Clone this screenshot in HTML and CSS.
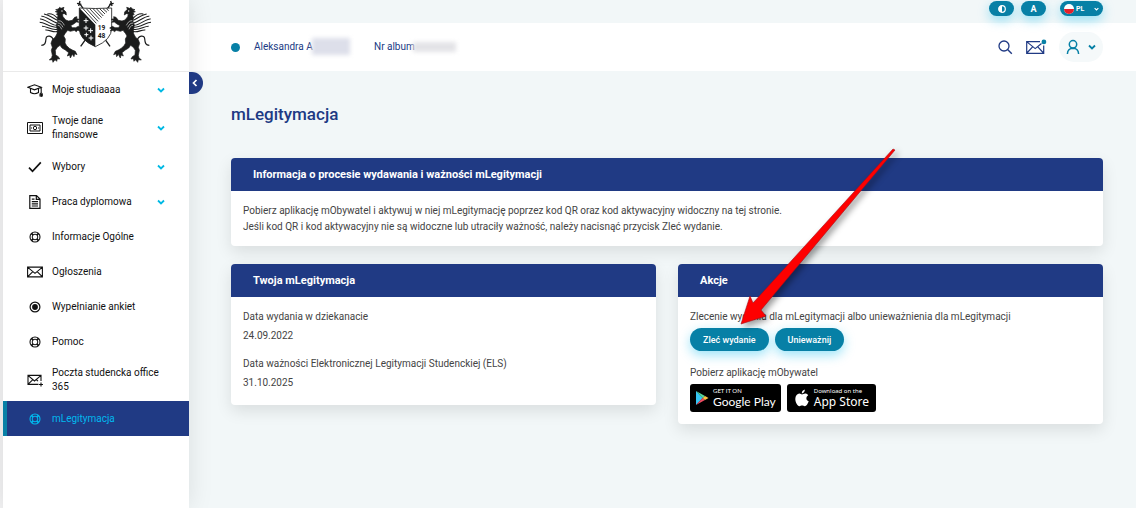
FILE: index.html
```
<!DOCTYPE html>
<html lang="pl">
  <head>
    <meta charset="utf-8" />
    <meta name="viewport" content="width=device-width, initial-scale=1" />
    <title>mLegitymacja</title>
    <link rel="stylesheet" href="styles.css" />
  </head>
  <body>
    <!-- shared icons -->
    <svg class="sprite" aria-hidden="true">
      <symbol id="chevron" viewBox="0 0 8 6">
        <path d="M1 1.5 L4 4.5 L7 1.5" fill="none" stroke="currentColor" stroke-width="1.8" />
      </symbol>
      <symbol id="ring" viewBox="0 0 16 16">
        <g fill="none" stroke="currentColor">
          <circle cx="8" cy="8" r="5" stroke-width="1.1" />
          <circle cx="8" cy="8" r="2.8" stroke-width="1" />
          <path d="M4.4 4.4 L6.2 6.2 M11.6 4.4 L9.8 6.2 M4.4 11.6 L6.2 9.8 M11.6 11.6 L9.8 9.8" stroke-width="1.8" />
        </g>
      </symbol>
      <symbol id="mail" viewBox="0 0 16 16">
        <path d="M.6 3.1 H15.4 V12.9 H.6 Z M.8 3.3 L8 9.3 L15.2 3.3 M.8 12.7 L5.8 7.6 M15.2 12.7 L10.2 7.6" fill="none" stroke="currentColor" stroke-width="1.1" />
      </symbol>
    </svg>

    <div class="page">
      <aside class="sidebar">
        <a class="logo" href="#" aria-label="Strona główna">
          <svg class="crest" viewBox="0 0 375 204">
            <defs>
              <g id="griffin">
                <path d="M62 29 L70 27 L74 22 L78 25 L87 22 L85 28 L93 36 L94 45 L88 41 L82 42 L84 50 L92 60 L101 63 L112 61 L119 52 L126 50 L125 56 L133 58 L127 62 L132 67 L124 66 L116 72 L107 77 L112 83 L122 83 L130 79 L138 84 L132 87 L136 93 L128 91 L124 95 L118 91 L106 94 L98 91 L90 101 L86 108 L91 117 L90 129 L95 137 L103 145 L112 150 L121 154 L126 164 L119 161 L117 170 L112 163 L106 174 L104 165 L97 168 L101 158 L91 150 L81 144 L75 136 L67 142 L61 151 L62 165 L70 170 L74 177 L67 176 L65 184 L60 179 L54 187 L52 179 L43 180 L50 173 L52 166 L49 151 L52 142 L48 130 L52 119 L61 111 L66 101 L67 88 L64 76 L68 64 L67 55 L69 46 L64 43 L69 38 L61 35 L68 32 Z" fill="#1b1c1c" stroke="#1b1c1c" stroke-width="2" />
                <circle cx="81" cy="33" r="2" fill="#fff" />
                <path d="M65 76 C50 77 26 54 15 57 M66 69 C53 66 29 46 19 49 M67 61 C55 55 40 44 27 42 M68 81 C52 86 28 67 14 67 M69 87 C54 94 34 78 21 79 M71 93 C58 101 43 88 31 90 M68 55 C58 44 49 39 37 42" fill="none" stroke="#1b1c1c" stroke-width="3.2" />
                <path d="M70 62 C82 62 84 70 88 76 M68 69 C78 69 80 76 84 82 M68 76 C76 77 77 82 80 88" fill="none" stroke="#fff" stroke-width="1.8" />
                <path d="M55 121 C52 106 34 104 33 116 C32 129 30 136 19 136" fill="none" stroke="#1b1c1c" stroke-width="3.5" />
              </g>
            </defs>
            <path d="M132 8 L225 139 M230 8 L137 139" stroke="#1b1c1c" stroke-width="4" />
            <path d="M126 10 L139 13 M135 3 L131 18 M236 10 L223 13 M227 3 L231 18" stroke="#1b1c1c" stroke-width="4" />
            <path d="M133 24 Q181 27 230 24 V84 Q230 119 181 140 Q132 119 133 84 Z" fill="#fff" stroke="#1b1c1c" stroke-width="2.5" />
            <path d="M133 24 L181 74 V140 Q132 119 133 84 Z" fill="#1b1c1c" />
            <path d="M144 26 L184 70 M154 26 L189 64 M164 26 L194 58 M174 26 L200 53 M184 26 L205 48 M194 26 L210 42 M204 26 L216 37 M214 26 L221 32" stroke="#1b1c1c" stroke-width="2.6" />
            <path d="M153 55 v14 M146 62 h14 M153 77 v14 M146 84 h14 M167 85 v14 M160 92 h14 M154 98 v12 M148 104 h12 M168 107 v14 M161 114 h14" stroke="#fff" stroke-width="3" />
            <text x="188" y="91" class="crest-year">19</text>
            <text x="188" y="115" class="crest-year">48</text>
            <use href="#griffin" />
            <use href="#griffin" transform="matrix(-1 0 0 1 362 0)" />
          </svg>
        </a>

        <nav>
          <ul class="menu">
            <li><a href="#">
              <svg class="menu-icon" viewBox="0 0 16 16"><path d="M.8 5.3 L7.5 2.8 L14.2 5.3 L7.5 7.8 Z M3.5 6.5 V10.5 Q7.5 13 11.5 10.5 V6.5 M14.2 5.3 V11 M13 14.5 V12 Q14.2 10 15.3 12 V14.5 M14.2 12 V15" fill="none" stroke="currentColor" stroke-width="1.1" /></svg>
              <span>Moje studiaaaa</span>
              <svg class="chevron"><use href="#chevron" /></svg>
            </a></li>
            <li><a href="#">
              <svg class="menu-icon" viewBox="0 0 16 16"><path d="M.5 2.5 H15.5 V13.5 H.5 Z M3 5 H13 V11 H3 Z" fill="none" stroke="currentColor" /><circle cx="8" cy="8" r="1.7" fill="none" stroke="currentColor" /><path d="M4 8 h1 M11 8 h1" stroke="currentColor" /></svg>
              <span>Twoje dane<br />finansowe</span>
              <svg class="chevron"><use href="#chevron" /></svg>
            </a></li>
            <li><a href="#">
              <svg class="menu-icon" viewBox="0 0 16 16"><path d="M2 8.7 L5.5 12.3 L13.8 3.3" fill="none" stroke="currentColor" stroke-width="1.7" /></svg>
              <span>Wybory</span>
              <svg class="chevron"><use href="#chevron" /></svg>
            </a></li>
            <li><a href="#">
              <svg class="menu-icon" viewBox="0 0 16 16"><path d="M2.8 1.6 H9.5 L13 5 V14.4 H2.8 Z M9.3 1.8 V5.3 H12.8 M4.8 5.2 H7.5 M4.8 7.6 H11 M4.8 9.8 H11 M4.8 12 H11" fill="none" stroke="currentColor" stroke-width="1.2" /></svg>
              <span>Praca dyplomowa</span>
              <svg class="chevron"><use href="#chevron" /></svg>
            </a></li>
            <li><a href="#">
              <svg class="menu-icon"><use href="#ring" /></svg>
              <span>Informacje Ogólne</span>
            </a></li>
            <li><a href="#">
              <svg class="menu-icon"><use href="#mail" /></svg>
              <span>Ogłoszenia</span>
            </a></li>
            <li><a href="#">
              <svg class="menu-icon" viewBox="0 0 16 16"><circle cx="8" cy="8" r="4.9" fill="none" stroke="currentColor" stroke-width="1.2" /><circle cx="8" cy="8" r="2.9" fill="currentColor" /></svg>
              <span>Wypełnianie ankiet</span>
            </a></li>
            <li><a href="#">
              <svg class="menu-icon"><use href="#ring" /></svg>
              <span>Pomoc</span>
            </a></li>
            <li><a href="#">
              <svg class="menu-icon" viewBox="0 0 16 16"><path d="M11.5 12.4 H1 V3.4 H14 V9 M1.2 3.6 L7.5 9 L13.8 3.6 M1.2 12.2 L5.6 7.8 M9.6 7.8 L11 9.2 M14 10.5 V14.5 M12 12.5 H16" fill="none" stroke="currentColor" stroke-width="1.1" /></svg>
              <span>Poczta studencka office<br />365</span>
            </a></li>
            <li><a href="#" class="active" aria-current="page">
              <svg class="menu-icon"><use href="#ring" /></svg>
              <span>mLegitymacja</span>
            </a></li>
          </ul>
        </nav>

        <button class="collapse" type="button" aria-label="Zwiń menu">
          <svg viewBox="0 0 8 8"><path d="M5.5 1 L2.5 4 L5.5 7" fill="none" stroke="currentColor" stroke-width="1.7" /></svg>
        </button>
      </aside>

      <div class="main">
        <div class="topbar">
          <button class="pill" type="button" aria-label="Kontrast">
            <svg class="contrast" viewBox="0 0 8 8"><circle cx="4" cy="4" r="3.3" fill="none" stroke="#fff" stroke-width="1.2" /><path d="M4 .7 A3.3 3.3 0 0 0 4 7.3 Z" fill="#fff" /></svg>
          </button>
          <button class="pill" type="button" aria-label="Rozmiar tekstu">A</button>
          <label class="pill language">
            <svg class="flag" viewBox="0 0 10 10"><circle cx="5" cy="5" r="5" fill="#fff" /><path d="M0 5 H10 A5 5 0 0 1 0 5 Z" fill="#e3202c" /></svg>
            <select aria-label="Język">
              <option>PL</option>
            </select>
            <svg class="language-arrow"><use href="#chevron" /></svg>
          </label>
        </div>

        <header class="header">
          <span class="dot"></span>
          <span class="person">Aleksandra A<i class="hidden-name"></i></span>
          <span class="album">Nr album<i class="hidden-album"></i></span>
          <div class="tools">
            <button class="tool" type="button" aria-label="Szukaj">
              <svg class="tool-search" viewBox="0 0 16 16"><circle cx="7" cy="7" r="5" fill="none" stroke="currentColor" stroke-width="1.3" /><path d="M10.6 10.6 L14.8 14.8" stroke="currentColor" stroke-width="1.4" /></svg>
            </button>
            <button class="tool" type="button" aria-label="Wiadomości">
              <svg class="tool-mail" viewBox="0 0 22 16"><path d="M15 2.7 H1.7 V14.3 H18.7 V6.5 M1.9 2.9 L10.2 9.6 L16.5 4.5 M1.9 14 L7.6 7.8 M18.5 14 L12.8 7.8" fill="none" stroke="currentColor" stroke-width="1.2" /><circle cx="18.9" cy="2.9" r="2.4" fill="#0780a6" /></svg>
            </button>
            <button class="account" type="button" aria-label="Konto">
              <svg class="account-user" viewBox="0 0 14 16"><circle cx="7" cy="5.3" r="3.7" fill="none" stroke="currentColor" stroke-width="1.5" /><path d="M1.4 15 Q1.6 9.4 7 9.3 Q12.4 9.4 12.6 15" fill="none" stroke="currentColor" stroke-width="1.5" /></svg>
              <svg class="chevron"><use href="#chevron" /></svg>
            </button>
          </div>
        </header>

        <main class="content">
          <h1>mLegitymacja</h1>

          <section class="card">
            <h2>Informacja o procesie wydawania i ważności mLegitymacji</h2>
            <div class="card-body info">
              <p>Pobierz aplikację mObywatel i aktywuj w niej mLegitymację poprzez kod QR oraz kod aktywacyjny widoczny na tej stronie.</p>
              <p>Jeśli kod QR i kod aktywacyjny nie są widoczne lub utraciły ważność, należy nacisnąć przycisk Zleć wydanie.</p>
            </div>
          </section>

          <div class="columns">
            <section class="card">
              <h2>Twoja mLegitymacja</h2>
              <dl class="card-body details">
                <dt>Data wydania w dziekanacie</dt>
                <dd>24.09.2022</dd>
                <dt>Data ważności Elektronicznej Legitymacji Studenckiej (ELS)</dt>
                <dd>31.10.2025</dd>
              </dl>
            </section>

            <section class="card">
              <h2>Akcje</h2>
              <div class="card-body actions">
                <p>Zlecenie wydania dla mLegitymacji albo unieważnienia dla mLegitymacji</p>
                <div class="buttons">
                  <button class="btn" type="button">Zleć wydanie</button>
                  <button class="btn" type="button">Unieważnij</button>
                </div>
                <p>Pobierz aplikację mObywatel</p>
                <div class="stores">
                  <a class="store google" href="#">
                    <svg viewBox="0 0 14 16"><path d="M1 1 V15 L7.6 8 Z" fill="#35c6f4" /><path d="M1 1 L10 6 L7.6 8 Z" fill="#55d69a" /><path d="M1 15 L10 10 L7.6 8 Z" fill="#ef4c62" /><path d="M10 6 L13.5 8 L10 10 L7.6 8 Z" fill="#fbc343" /></svg>
                    <span class="store-text"><small>GET IT ON</small>Google Play</span>
                  </a>
                  <a class="store apple" href="#">
                    <svg viewBox="0 0 14 18"><path d="M9.8 0.4 Q9.9 3.6 6.8 4.4 Q6.6 1.5 9.8 .4 Z M7 5.4 C8 5.4 9 4.4 10.6 4.6 Q12.3 4.8 13.2 6.2 C10.5 7.9 10.9 11.2 13.7 12.3 C12.8 14.8 11.4 17.2 9.8 17.2 C8.8 17.2 8.2 16.6 7.1 16.6 C6 16.6 5.3 17.2 4.4 17.2 C2.5 17.2 .3 13.3 .3 10 C.3 6.6 2.4 4.7 4.4 4.6 C5.6 4.6 6.3 5.4 7 5.4 Z" fill="#fff" /></svg>
                    <span class="store-text"><small>Download on the</small>App Store</span>
                  </a>
                </div>
              </div>
              <!-- arrow pointing at the "Zleć wydanie" button -->
              <svg class="arrow" viewBox="0 0 160 184" aria-hidden="true">
                <path d="M155 3 L157 4 L23 164 L28 170 L3 178 L12 150 L15 157 Z" fill="#fe0000" stroke="#a30d18" stroke-width=".6" />
              </svg>
            </section>
          </div>
        </main>
      </div>
    </div>
  </body>
</html>
```
FILE: styles.css
```
* {
  box-sizing: border-box;
}
body {
  margin: 0;
  background-color: #f2f7f8;
  color: #444;
  font-family: Roboto, Arial, sans-serif;
  font-size: 10px;
  line-height: 16px;
}
h1,
h2,
p,
ul,
dl,
dd {
  margin: 0;
  padding: 0;
}
button,
select {
  border: none;
  padding: 0;
  background: none;
  color: inherit;
  font-family: inherit;
  cursor: pointer;
}
a {
  color: inherit;
  text-decoration: none;
}
.sprite {
  display: none;
}
.page {
  display: flex;
  min-height: 100vh;
  border-left: 3px solid #f2f2f3;
}

/* sidebar */
.sidebar {
  position: relative;
  z-index: 1;
  flex: 0 0 186px;
  background-color: #fff;
  box-shadow: 0 0 24px rgba(0, 0, 0, 0.1);
}
.logo {
  display: flex;
  height: 72px;
  padding-left: 32px;
  border-bottom: 1px solid #eaeaea;
}
.crest {
  width: 125px;
  height: 68px;
}
.crest-year {
  font-size: 20px;
  font-weight: 700;
  fill: #1b1c1c;
}
.menu {
  list-style: none;
}
.menu a {
  display: flex;
  align-items: center;
  gap: 9px;
  min-height: 35px;
  padding: 7px 24px;
  border-left: 0 solid #0780a6;
  color: #111;
  line-height: 14px;
}
.menu span {
  flex: 1;
  white-space: nowrap;
}
.menu a.active {
  padding-left: 20px;
  border-left-width: 4px;
  background-color: #203a84;
  color: #00b9ee;
}
.menu-icon {
  flex: none;
  width: 16px;
  height: 16px;
}
.chevron {
  flex: none;
  width: 8px;
  height: 6px;
}
.menu .chevron {
  color: #00b9e4;
}
.collapse {
  position: absolute;
  top: 72px;
  left: 100%;
  display: flex;
  align-items: center;
  width: 14px;
  height: 22px;
  padding-left: 2px;
  border-radius: 0 11px 11px 0;
  background-color: #203a84;
  color: #fff;
}
.collapse svg {
  width: 8px;
  height: 8px;
}

/* top of the page */
.main {
  flex: 1;
  min-width: 0;
}
.topbar {
  display: flex;
  justify-content: flex-end;
  gap: 7px;
  height: 23px;
  padding: 1px 33px 0 0;
}
.pill {
  position: relative;
  display: flex;
  align-items: center;
  justify-content: center;
  width: 25px;
  height: 15px;
  border-radius: 8px;
  background-color: #0780a6;
  box-shadow: 0 4px 12px rgba(0, 185, 238, 0.4);
  color: #fff;
  font-size: 9px;
  font-weight: 700;
}
.contrast {
  width: 8px;
  height: 8px;
}
.language {
  gap: 2px;
  width: 43px;
  margin-left: 7px;
}
.language select {
  width: 12px;
  appearance: none;
  font-size: 7px;
  font-weight: 700;
}
.flag {
  width: 10px;
  height: 10px;
}
.language-arrow {
  width: 5px;
  height: 4px;
  margin-left: 4px;
}
.header {
  display: flex;
  align-items: center;
  height: 48px;
  padding: 0 33px 0 42px;
  background-color: #fff;
  color: #203a84;
}
.dot {
  width: 9px;
  height: 9px;
  margin-right: 14px;
  border-radius: 50%;
  background-color: #0780a6;
}
.person,
.album {
  position: relative;
}
.person {
  width: 62px;
}
.album {
  margin-left: 58px;
}
.hidden-name,
.hidden-album {
  position: absolute;
  background-color: #dddfea;
  filter: blur(2px);
}
.hidden-name {
  top: -1px;
  left: 58px;
  width: 38px;
  height: 17px;
}
.hidden-album {
  top: 3px;
  left: 39px;
  width: 43px;
  height: 10px;
  background-color: #e3e3e7;
}
.tools {
  display: flex;
  align-items: center;
  gap: 12px;
  margin-left: auto;
}
.tool {
  display: flex;
}
.tool-search {
  width: 16px;
  height: 16px;
}
.tool-mail {
  width: 22px;
  height: 16px;
}
.account {
  display: flex;
  align-items: center;
  justify-content: center;
  gap: 8px;
  width: 44px;
  height: 30px;
  border-radius: 15px;
  background-color: #f5f9fa;
  color: #0780a6;
}
.account-user {
  width: 14px;
  height: 16px;
}

/* cards */
.content {
  padding: 32px 33px 32px 42px;
}
h1 {
  margin-bottom: 33px;
  color: #203a84;
  font-size: 17px;
  font-weight: 500;
  line-height: 22px;
}
.card {
  position: relative;
  border-radius: 4px;
  background-color: #fff;
  box-shadow: 0 6px 16px rgba(0, 0, 0, 0.1);
}
.card h2 {
  padding: 0 22px;
  border-radius: 4px 4px 0 0;
  background-color: #203a84;
  color: #fff;
  font-size: 11px;
  font-weight: 700;
  line-height: 33px;
}
.card-body {
  padding: 12px;
}
.info {
  padding-bottom: 11px;
}
.columns {
  display: grid;
  grid-template-columns: 1fr 1fr;
  align-items: start;
  gap: 22px;
  margin-top: 18px;
}
.details {
  padding-bottom: 2px;
}
.details dt {
  margin-bottom: 3px;
}
.details dd {
  margin-bottom: 12px;
}
.buttons {
  display: flex;
  gap: 6px;
  margin: 3px 0 14px;
}
.btn {
  height: 23px;
  padding: 0 13px;
  border-radius: 12px;
  background-color: #0780a6;
  box-shadow: 0 4px 12px rgba(0, 185, 238, 0.4);
  color: #fff;
  font-size: 9px;
  font-weight: 500;
}
.stores {
  display: flex;
  gap: 6px;
  margin-top: 3px;
}
.store {
  display: flex;
  align-items: center;
  gap: 4px;
  height: 28px;
  padding: 0 5px;
  border-radius: 3px;
  background-color: #000;
  color: #fff;
}
.store-text {
  font-family: Lato, sans-serif;
  font-size: 12px;
  line-height: 14px;
}
.store small {
  display: block;
  font-size: 6px;
  line-height: 8px;
}
.google svg {
  width: 14px;
  height: 16px;
}
.apple {
  padding: 0 7px;
}
.apple svg {
  width: 16px;
  height: 18px;
}
.apple .store-text {
  font-family: "Noto Sans", sans-serif;
}
.arrow {
  position: absolute;
  top: -118px;
  left: 60px;
  width: 160px;
  height: 184px;
  pointer-events: none;
  filter: drop-shadow(3px 3px 3px rgba(0, 0, 0, 0.4));
}
```
